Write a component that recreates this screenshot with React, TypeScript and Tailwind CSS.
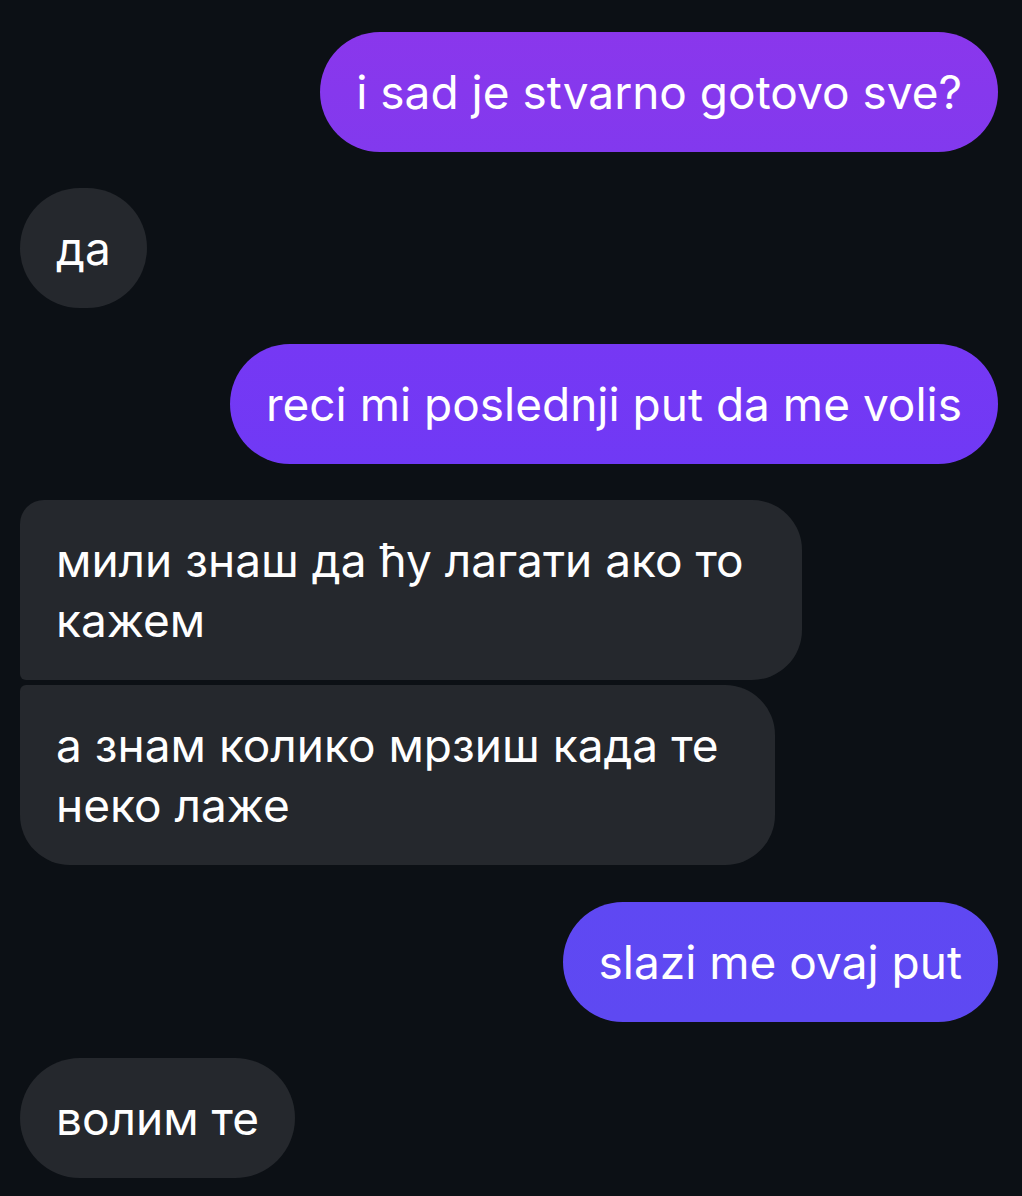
import React from "react";

const font = { fontFamily: "Inter, 'Noto Sans', sans-serif" };

function Sent({ text, cls }: { text: string; cls: string }) {
  return (
    <div className="flex justify-end">
      <div className={`rounded-[60px] px-[36px] py-[30px] text-[46px] leading-[60px] text-white tracking-[0px] ${cls}`}>
        {text}
      </div>
    </div>
  );
}

export default function App() {
  return (
    <div className="min-h-[1196px] w-full bg-[#0c1015] pl-[20px] pr-[24px] pt-[32px] pb-[18px]" style={font}>
      <div className="flex flex-col">
        <Sent text="i sad je stvarno gotovo sve?" cls="bg-gradient-to-b from-[#8a37ec] to-[#8239ee]" />
        <div className="mt-[36px] flex">
          <div className="rounded-[60px] bg-[#25282d] px-[36px] py-[30px] text-[46px] leading-[60px] text-white tracking-[0px]">да</div>
        </div>
        <div className="mt-[36px]">
          <Sent text="reci mi poslednji put da me volis" cls="bg-gradient-to-b from-[#7638f4] to-[#7039f5]" />
        </div>
        <div className="mt-[36px] flex">
          <div className="w-[782px] rounded-tl-[24px] rounded-bl-[6px] rounded-r-[50px] bg-[#25282d] px-[36px] py-[30px] text-[46px] leading-[60px] text-white tracking-[0px]">
            мили знаш да ћу лагати ако то<br />кажем
          </div>
        </div>
        <div className="mt-[5px] flex">
          <div className="w-[755px] rounded-tl-[6px] rounded-bl-[50px] rounded-r-[50px] bg-[#25282d] px-[36px] py-[30px] text-[46px] leading-[60px] text-white tracking-[0px]">
            а знам колико мрзиш када те<br />неко лаже
          </div>
        </div>
        <div className="mt-[37px]">
          <Sent text="slazi me ovaj put" cls="bg-gradient-to-b from-[#5f48f3] to-[#5e49f2]" />
        </div>
        <div className="mt-[36px] flex">
          <div className="rounded-[60px] bg-[#25282d] px-[36px] py-[30px] text-[46px] leading-[60px] text-white tracking-[0px]">волим те</div>
        </div>
      </div>
    </div>
  );
}
